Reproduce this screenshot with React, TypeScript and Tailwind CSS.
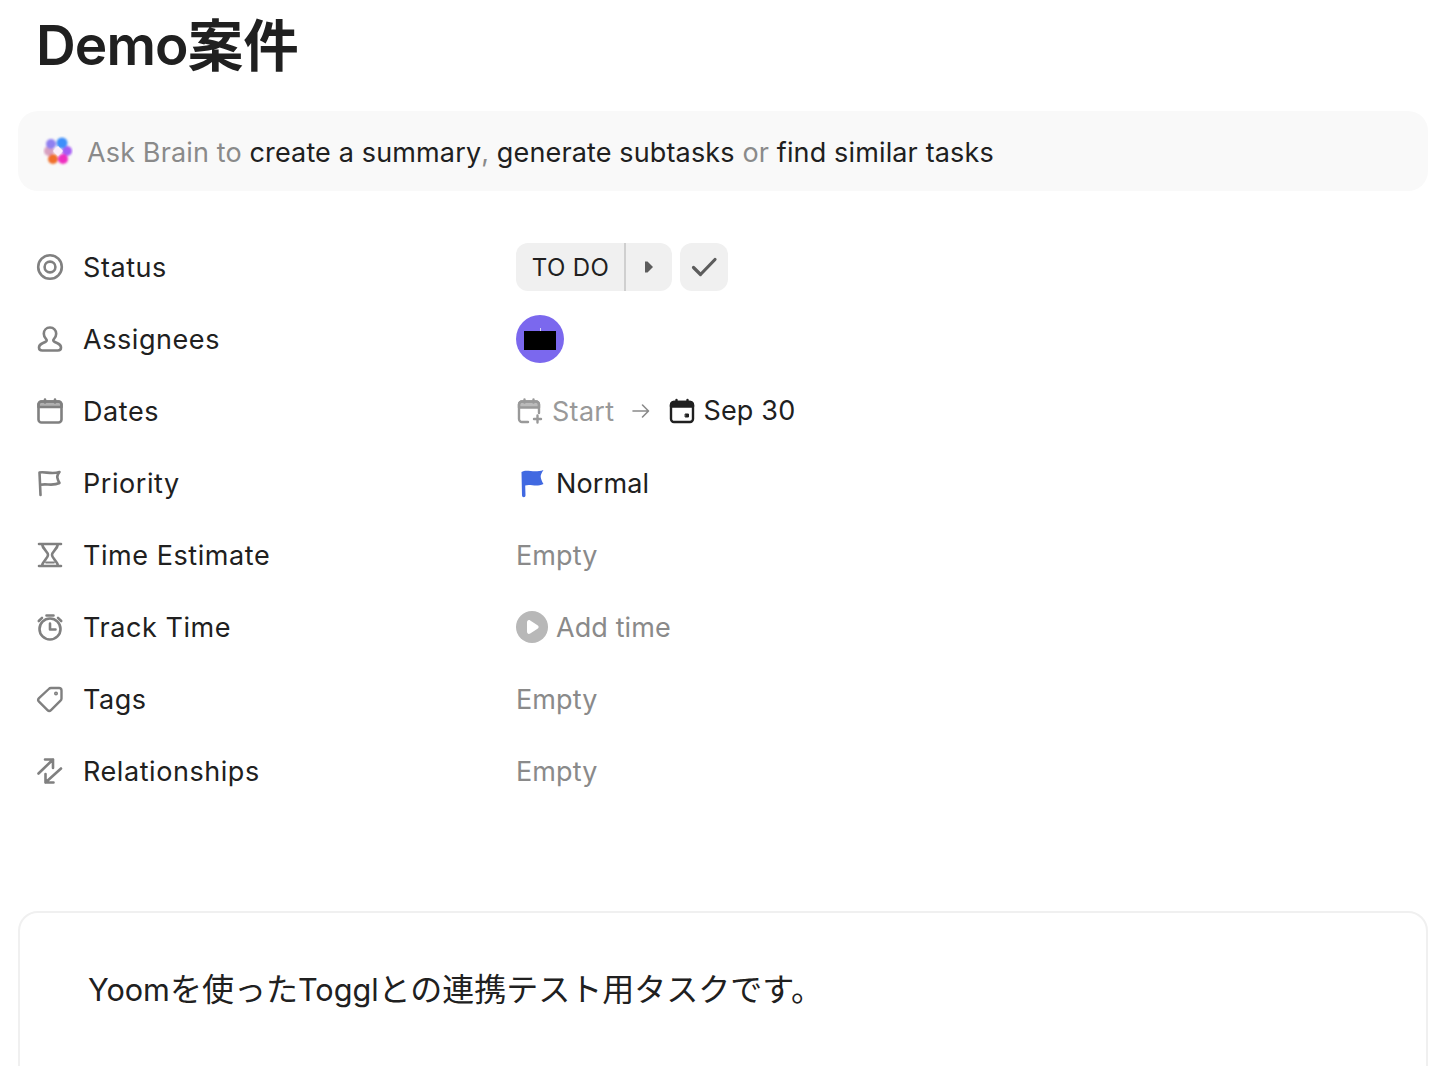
import React from "react";

const F = "font-['Inter','Noto_Sans_CJK_JP',sans-serif]";

const I = ({ children, c = "#808080", w = 2.8 }: { children: React.ReactNode; c?: string; w?: number }) => (
  <svg width="28" height="28" viewBox="0 0 28 28" fill="none" stroke={c} strokeWidth={w} strokeLinecap="round" strokeLinejoin="round">
    {children}
  </svg>
);

const icons: Record<string, React.ReactNode> = {
  status: <I w={2.6}><circle cx="14" cy="14" r="11.800" /><circle cx="14" cy="14" r="5.400" /></I>,
  assignees: (
    <I w={2.6}>
      <path d="M14 2.500c-3.700 0-6.200 2.700-6.200 6.200 0 2.600 1.300 4.400 2.500 5.600.8.900.4 2-.6 2.400l-3.200 1.500c-2 .9-3.500 2.300-3.500 4.300 0 1.900 1.300 3 3.200 3h15.600c1.900 0 3.200-1.100 3.200-3 0-2-1.500-3.400-3.500-4.300l-3.200-1.500c-1-.4-1.400-1.500-.6-2.400 1.200-1.200 2.500-3 2.500-5.600 0-3.500-2.500-6.200-6.200-6.200z" />
    </I>
  ),
  dates: (
    <I w={2.6}>
      <path d="M2.500 10V7.500A3 3 0 0 1 5.500 4.500h17a3 3 0 0 1 3 3V10z" fill="#b0b0b0" />
      <path d="M5.500 4.500h17a3 3 0 0 1 3 3v15a3 3 0 0 1-3 3h-17a3 3 0 0 1-3-3v-15a3 3 0 0 1 3-3z" />
      <path d="M9 2.500v3M19 2.500v3" />
    </I>
  ),
  priority: (
    <I w={2.6}>
      <path d="M4.500 26 3.500 3.500c5-1.500 12 2.500 20-.5-2 2.500-2.500 4-2.200 5.500s1 3.500 2.200 5.500c-7 3.500-13 .2-19 1.800" />
    </I>
  ),
  time: (
    <I w={2.6}>
      <path d="M3 3h22M3 25h22M6 3c.5 5 6 7.500 6 11s-5.500 6-6 11M22 3c-.5 5-6 7.500-6 11s5.500 6 6 11" />
      <path d="M10 21.500h8" strokeWidth="1.800" />
    </I>
  ),
  track: (
    <I w={2.6}>
      <circle cx="14" cy="16" r="10.500" />
      <path d="M14 10.500v6h5.500M10.500 2.500h7M2.800 8 6 4.800M25.200 8 22 4.800" />
    </I>
  ),
  tags: (
    <I w={2.4}>
      <path d="M15 3h8a2.500 2.500 0 0 1 2.500 2.500v8a3 3 0 0 1-1 2.200l-9.500 9.500a2.500 2.500 0 0 1-3.500 0l-8.500-8.500a2.500 2.500 0 0 1 0-3.500L12.800 4A3 3 0 0 1 15 3z" />
      <circle cx="20" cy="8.500" r=".8" />
    </I>
  ),
  rel: (
    <I w={2.6}>
      <path d="M2.500 16.500 17 2.500M9 2.500h8V11M25 11.500 9.500 25.500M9.500 17v8.500h8" />
    </I>
  ),
};

function Row({ icon, label, children }: { icon: string; label: string; children: React.ReactNode }) {
  return (
    <div className="flex h-[72px] items-center">
      <div className="flex w-[498px] shrink-0 items-center">
        <span className="ml-[18px] flex h-7 w-7 items-center justify-center">{icons[icon]}</span>
        <span className="ml-[19px] translate-y-px text-[27px] tracking-[0.56px] text-[#202020]">{label}</span>
      </div>
      <div className="flex items-center text-[27px] tracking-[0.1px]">{children}</div>
    </div>
  );
}

const Empty = () => <span className="translate-y-px text-[#8a8a8a]">Empty</span>;

export default function App() {
  return (
    <div className={`${F} h-[1066px] overflow-hidden bg-white px-[18px] antialiased`}>
      <h1 className="flex h-[111px] items-center pb-[20px] pl-[18px] text-[55px] font-semibold leading-none text-[#202020]">
        <span className="tracking-[-0.9px]">Demo</span>
        <span className="text-[55.500px]">案件</span>
      </h1>

      <div className="flex h-20 w-[1410px] items-center rounded-[20px] bg-[#f9f9f9] pl-[25px] pt-[4px] text-[27px] tracking-[0.14px] text-[#202020]">
        <svg width="30" height="30" viewBox="0 0 30 30" className="mr-[14px] -translate-y-[2px] shrink-0">
          <defs>
            <filter id="bl" x="-10%" y="-10%" width="120%" height="120%"><feGaussianBlur stdDeviation="1" /></filter>
            <filter id="bl2"><feGaussianBlur stdDeviation="0.5" /></filter>
          </defs>
          <g filter="url(#bl)">
            <circle cx="6" cy="15" r="5" fill="#d8a0c0" />
            <circle cx="8" cy="8" r="5" fill="#8f7ff0" />
            <circle cx="24" cy="15" r="5" fill="#a45bf5" />
            <circle cx="19" cy="7" r="5.500" fill="#3d8ffa" />
            <circle cx="10" cy="23" r="5" fill="#f0702c" />
            <circle cx="20" cy="23" r="5" fill="#ef2fc0" />
          </g>
          <path d="M15 10 20 15l-5 5-5-5z" fill="#fbeefc" filter="url(#bl2)" />
        </svg>
        <span className="text-[#8a8a8a]">Ask Brain to&nbsp;</span>
        <span>create a summary</span>
        <span className="text-[#8a8a8a]">,&nbsp;</span>
        <span>generate subtasks</span>
        <span className="text-[#8a8a8a]">&nbsp;or&nbsp;</span>
        <span>find similar tasks</span>
      </div>

      <div className="mt-10">
        <Row icon="status" label="Status">
          <div className="flex h-12 items-stretch overflow-hidden rounded-xl bg-[#f0f0f0]">
            <span className="flex w-[110px] items-center justify-center border-r-2 border-[#cfcfcf] pl-[1px] pt-[2px] text-[24px] tracking-[0.36px] text-[#202020]">TO DO</span>
            <span className="flex w-[46px] items-center justify-center">
              <svg width="12" height="14" viewBox="0 0 12 14"><path d="M2 1.500h2.500L10 7l-5.500 5.500H2z" fill="#5c5c5c" /></svg>
            </span>
          </div>
          <span className="ml-2 flex h-12 w-12 items-center justify-center rounded-xl bg-[#f0f0f0]">
            <svg width="28" height="28" viewBox="0 0 28 28" fill="none" stroke="#5c5c5c" strokeWidth="3.200" strokeLinecap="round" strokeLinejoin="round"><path d="m3.500 14.500 7 7L25 6.500" /></svg>
          </span>
        </Row>
        <Row icon="assignees" label="Assignees">
          <span className="relative flex h-12 w-12 items-center justify-center rounded-full bg-[#7b68ee]">
            <span className="h-[19px] w-8 translate-y-px bg-black" />
            <span className="absolute left-[24px] top-[13px] h-[3px] w-px bg-[#d8d2fa]" />
          </span>
        </Row>
        <Row icon="dates" label="Dates">
          <svg width="26" height="26" viewBox="0 0 26 26" fill="none" stroke="#999" strokeWidth="2.400" strokeLinecap="round" strokeLinejoin="round" className="ml-[1px]">
            <path d="M2 9.500V6.500a3 3 0 0 1 3-3h14a3 3 0 0 1 3 3v3z" fill="#bbb" />
            <path d="M11 24H5a3 3 0 0 1-3-3V6.500a3 3 0 0 1 3-3h14a3 3 0 0 1 3 3V15" />
            <path d="M7.500 1.500v3M16.500 1.500v3M20.500 17.500v7M17 21h7" />
          </svg>
          <span className="ml-[9px] translate-y-px tracking-[0.3px] text-[#999]">Start</span>
          <svg width="20" height="20" viewBox="0 0 20 20" fill="none" stroke="#8a8a8a" strokeWidth="1.600" strokeLinecap="round" strokeLinejoin="round" className="ml-[17px]">
            <path d="M2 10h15M11.500 4l6 6-6 6" />
          </svg>
          <svg width="26" height="26" viewBox="0 0 26 26" fill="none" stroke="#202020" strokeWidth="2.400" strokeLinecap="round" strokeLinejoin="round" className="ml-[18px]">
            <path d="M2 8.500V7a3 3 0 0 1 3-3h16a3 3 0 0 1 3 3v1.500z" fill="#202020" />
            <path d="M5 4h16a3 3 0 0 1 3 3v14a3 3 0 0 1-3 3H5a3 3 0 0 1-3-3V7a3 3 0 0 1 3-3z" />
            <path d="M7.500 2v3M18.500 2v3" />
            <rect x="16.500" y="16" width="3" height="3" fill="#202020" strokeWidth="1" />
          </svg>
          <span className="ml-[8px] tracking-[0.2px] text-[#202020]">Sep 30</span>
        </Row>
        <Row icon="priority" label="Priority">
          <svg width="28" height="30" viewBox="0 0 28 30" className="ml-[2px]">
            <path d="M4 27.500 3.500 4C9 .5 15 5.500 25.500 2c-2 3-3 5-2.800 7s1.300 4.500 2.800 7c-8 3.500-13-.5-18.300 1.500l.3 10a1.700 1.700 0 0 1-3.500 0z" fill="#4169e1" />
          </svg>
          <span className="ml-[10px] translate-y-px text-[#202020]">Normal</span>
        </Row>
        <Row icon="time" label="Time Estimate"><Empty /></Row>
        <Row icon="track" label="Track Time">
          <span className="flex h-8 w-8 items-center justify-center rounded-full bg-[#b8b8b8]">
            <svg width="18" height="18" viewBox="0 0 18 18"><path d="M4 4.500c0-2 1.500-3 3.200-2l7.300 4.800c1.500 1 1.500 2.500 0 3.400l-7.300 4.800c-1.700 1-3.200 0-3.200-2z" fill="#fff" /></svg>
          </span>
          <span className="ml-[8px] translate-y-px text-[#8a8a8a]">Add time</span>
        </Row>
        <Row icon="tags" label="Tags"><Empty /></Row>
        <Row icon="rel" label="Relationships"><Empty /></Row>
      </div>

      <div className="mt-[104px] h-[300px] w-[1410px] rounded-[20px] border-2 border-[#f0f0f0] pl-[68px] pt-[55px] text-[32px] leading-[44px] text-[#202020]">
        <span className="text-[30.600px]">Yoom</span>を使った<span className="text-[30.600px]">Toggl</span>との連携テスト用タスクです。
      </div>
    </div>
  );
}
